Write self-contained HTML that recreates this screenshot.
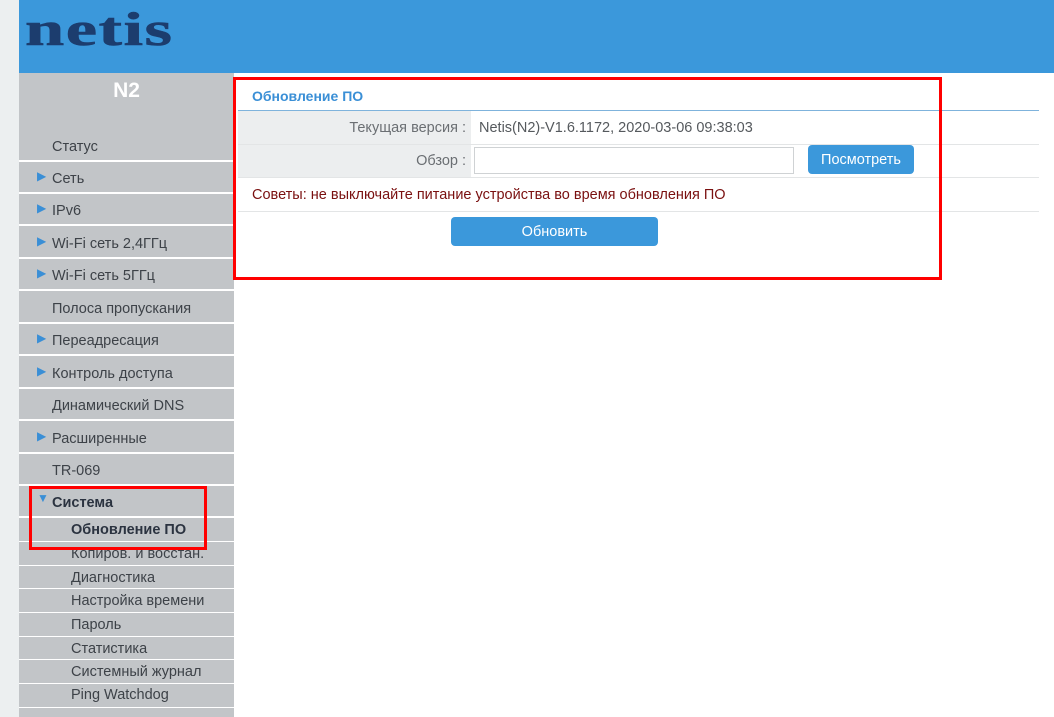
<!DOCTYPE html>
<html><head><meta charset="utf-8"><style>
*{margin:0;padding:0;box-sizing:border-box}
body{width:1054px;height:717px;overflow:hidden;background:#fff;font-family:"Liberation Sans",Arial,sans-serif;position:relative}
.strip{position:absolute;left:0;top:0;width:19px;height:717px;background:#eceff0}
.hdr{position:absolute;left:19px;top:0;width:1035px;height:73px;background:#3b98db;overflow:hidden}
.logo{position:absolute;left:6px;top:30px;font-family:"Liberation Serif",serif;font-weight:bold;font-size:48px;line-height:0;color:#1c3d6e;letter-spacing:1px;transform:scaleX(1.47);transform-origin:0 0;-webkit-text-stroke:0.6px #1c3d6e}
.side{position:absolute;left:19px;top:73px;width:215px;height:644px;background:#c2c5c8}
.n2{position:absolute;width:215px;top:79px;text-align:center;color:#fff;font-weight:bold;font-size:21px}
.it{position:absolute;left:19px;width:215px;border-bottom:2px solid #fff;font-size:14.5px;color:#3d4248;padding-left:33px;padding-top:2px}
.it .a{position:absolute;left:18px;top:-1px;color:#3a8fd6;font-size:12px}
.sub{position:absolute;left:19px;width:215px;border-bottom:1.5px solid #fff;font-size:14.5px;color:#3d4248;padding-left:52px;padding-top:1px}
.c{position:absolute;font-size:14.5px}
.red{position:absolute;border:3.5px solid #f00}
</style></head><body>
<div class="strip"></div>
<div class="hdr"><div class="logo">netis</div></div>
<div class="side"></div>
<div class="n2" style="left:19px">N2</div>
<div class="it" style="top:128px;height:34px;line-height:34px">Статус</div>
<div class="it" style="top:162px;height:32px;line-height:30px"><span class="a">▶</span>Сеть</div>
<div class="it" style="top:194px;height:32px;line-height:30px"><span class="a">▶</span>IPv6</div>
<div class="it" style="top:226px;height:33px;line-height:32px"><span class="a">▶</span>Wi-Fi сеть 2,4ГГц</div>
<div class="it" style="top:259px;height:32px;line-height:30px"><span class="a">▶</span>Wi-Fi сеть 5ГГц</div>
<div class="it" style="top:291px;height:33px;line-height:32px">Полоса пропускания</div>
<div class="it" style="top:324px;height:32px;line-height:30px"><span class="a">▶</span>Переадресация</div>
<div class="it" style="top:356px;height:33px;line-height:32px"><span class="a">▶</span>Контроль доступа</div>
<div class="it" style="top:389px;height:32px;line-height:30px">Динамический DNS</div>
<div class="it" style="top:421px;height:33px;line-height:32px"><span class="a">▶</span>Расширенные</div>
<div class="it" style="top:454px;height:32px;line-height:30px">TR-069</div>
<div class="it" style="top:486px;height:32px;line-height:30px;font-weight:bold;color:#2b3340"><span class="a" style="top:-3px">▼</span>Система</div>
<div class="sub" style="top:518px;height:24px;line-height:22px;font-weight:bold;color:#2b3340">Обновление ПО</div>
<div class="sub" style="top:542px;height:24px;line-height:22px">Копиров. и восстан.</div>
<div class="sub" style="top:566px;height:23px;line-height:22px">Диагностика</div>
<div class="sub" style="top:589px;height:24px;line-height:22px">Настройка времени</div>
<div class="sub" style="top:613px;height:24px;line-height:22px">Пароль</div>
<div class="sub" style="top:637px;height:23px;line-height:22px">Статистика</div>
<div class="sub" style="top:660px;height:24px;line-height:22px">Системный журнал</div>
<div class="sub" style="top:684px;height:24px;line-height:21px">Ping Watchdog</div>

<div class="c" style="left:252px;top:88px;color:#3a8fd6;font-weight:bold;font-size:14px">Обновление ПО</div>
<div style="position:absolute;left:238px;top:110px;width:801px;height:1px;background:#7fb3dc"></div>
<div style="position:absolute;left:238px;top:111px;width:233px;height:66px;background:#eceeef"></div>
<div style="position:absolute;left:238px;top:144px;width:801px;height:1px;background:#e3e5e6"></div>
<div style="position:absolute;left:238px;top:177px;width:801px;height:1px;background:#e3e5e6"></div>
<div style="position:absolute;left:238px;top:211px;width:801px;height:1px;background:#e3e5e6"></div>
<div class="c" style="left:238px;width:228px;text-align:right;top:120px;color:#6b6f73">Текущая версия :</div>
<div class="c" style="left:479px;top:120px;color:#55595d">Netis(N2)-V1.6.1172, 2020-03-06 09:38:03</div>
<div class="c" style="left:238px;width:228px;text-align:right;top:153px;color:#6b6f73">Обзор :</div>
<div style="position:absolute;left:474px;top:147px;width:320px;height:27px;border:1px solid #cfd2d4;background:#fff"></div>
<div style="position:absolute;left:808px;top:145px;width:106px;height:29px;background:#3b98db;border-radius:4px;color:#fff;font-size:14.5px;text-align:center;line-height:30px">Посмотреть</div>
<div class="c" style="left:252px;top:187px;color:#7a1010">Советы: не выключайте питание устройства во время обновления ПО</div>
<div style="position:absolute;left:451px;top:217px;width:207px;height:29px;background:#3b98db;border-radius:4px;color:#fff;font-size:14.5px;text-align:center;line-height:30px">Обновить</div>

<div class="red" style="left:233px;top:77px;width:709px;height:203px"></div>
<div class="red" style="left:29px;top:486px;width:178px;height:64px"></div>
</body></html>
